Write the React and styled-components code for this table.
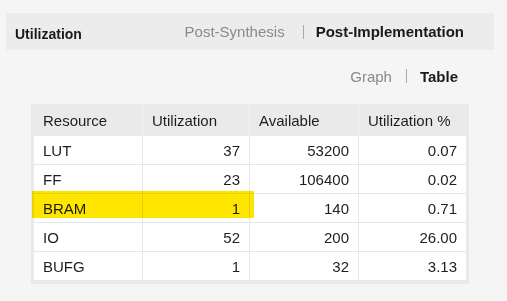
import React from "react";
import styled, { createGlobalStyle } from "styled-components";

const Global = createGlobalStyle`
  html, body { margin: 0; padding: 0; background: #f5f5f5; }
  body { font-family: "Liberation Sans", Arial, sans-serif; color: #1e1e1e; }
`;

const Page = styled.div`
  width: 507px;
  height: 301px;
  padding-top: 13px;
  box-sizing: border-box;
  overflow: hidden;
`;

const TopBar = styled.div`
  margin-left: 6px;
  width: 488px;
  height: 37px;
  background: #ececec;
  display: flex;
  align-items: center;
  box-sizing: border-box;
  padding: 0 30px 0 9px;
`;

const Title = styled.div`
  font-size: 14px;
  font-weight: bold;
  color: #1a1a1a;
  padding-top: 4px;
`;

const Tabs = styled.div`
  margin-left: auto;
  display: flex;
  align-items: center;
  font-size: 15px;
`;

const Tab = styled.span`
  color: ${(p) => (p.$active ? "#1a1a1a" : "#8a8a8a")};
  font-weight: ${(p) => (p.$active ? "bold" : "normal")};
`;

const Sep = styled.span`
  width: 1px;
  height: 14px;
  background: #a8a8a8;
  margin: 0 ${(p) => p.$r}px 0 ${(p) => p.$l}px;
`;

const ViewSwitch = styled.div`
  display: flex;
  align-items: center;
  justify-content: flex-end;
  height: 20px;
  margin-top: 16px;
  padding-right: 49px;
  font-size: 15px;
`;

const Panel = styled.div`
  position: relative;
  margin: 18px 0 0 31px;
  width: 438px;
  box-sizing: border-box;
  background: #e9e9e9;
  padding: 0 3px 4px 3px;
`;

const Grid = styled.div`
  display: grid;
  grid-template-columns: 108px 106px 108px 107px;
  gap: 1px;
  background: ${(p) => p.$line};
`;

const HeadCell = styled.div`
  height: 30px;
  background: #eaeaea;
  display: flex;
  align-items: center;
  padding: 1px 9px 0;
  font-size: 15px;
  color: #1e1e1e;
`;

const Cell = styled.div`
  height: 28px;
  background: #fff;
  display: flex;
  align-items: center;
  justify-content: ${(p) => (p.$num ? "flex-end" : "flex-start")};
  padding: 0 9px;
  font-size: 15px;
  color: #1e1e1e;
`;

const Body = styled(Grid)`
  margin-top: 1px;
`;

const Highlight = styled.div`
  position: absolute;
  left: 1px;
  top: 87px;
  width: 222px;
  height: 27px;
  background: #ffe600;
  mix-blend-mode: multiply;
  pointer-events: none;
`;

const headers = ["Resource", "Utilization", "Available", "Utilization %"];
const rows = [
  ["LUT", "37", "53200", "0.07"],
  ["FF", "23", "106400", "0.02"],
  ["BRAM", "1", "140", "0.71"],
  ["IO", "52", "200", "26.00"],
  ["BUFG", "1", "32", "3.13"],
];

export default function App() {
  return (
    <Page>
      <Global />
      <TopBar>
        <Title>Utilization</Title>
        <Tabs>
          <Tab>Post-Synthesis</Tab>
          <Sep $l={18} $r={12} />
          <Tab $active>Post-Implementation</Tab>
        </Tabs>
      </TopBar>
      <ViewSwitch>
        <Tab>Graph</Tab>
        <Sep $l={14} $r={13} />
        <Tab $active>Table</Tab>
      </ViewSwitch>
      <Panel>
        <Grid $line="#f3f3f3">
          {headers.map((h) => (
            <HeadCell key={h}>{h}</HeadCell>
          ))}
        </Grid>
        <Body $line="#e6e6e6">
          {rows.map((r) =>
            r.map((v, i) => (
              <Cell key={r[0] + i} $num={i > 0}>
                {v}
              </Cell>
            ))
          )}
        </Body>
        <Highlight />
      </Panel>
    </Page>
  );
}
